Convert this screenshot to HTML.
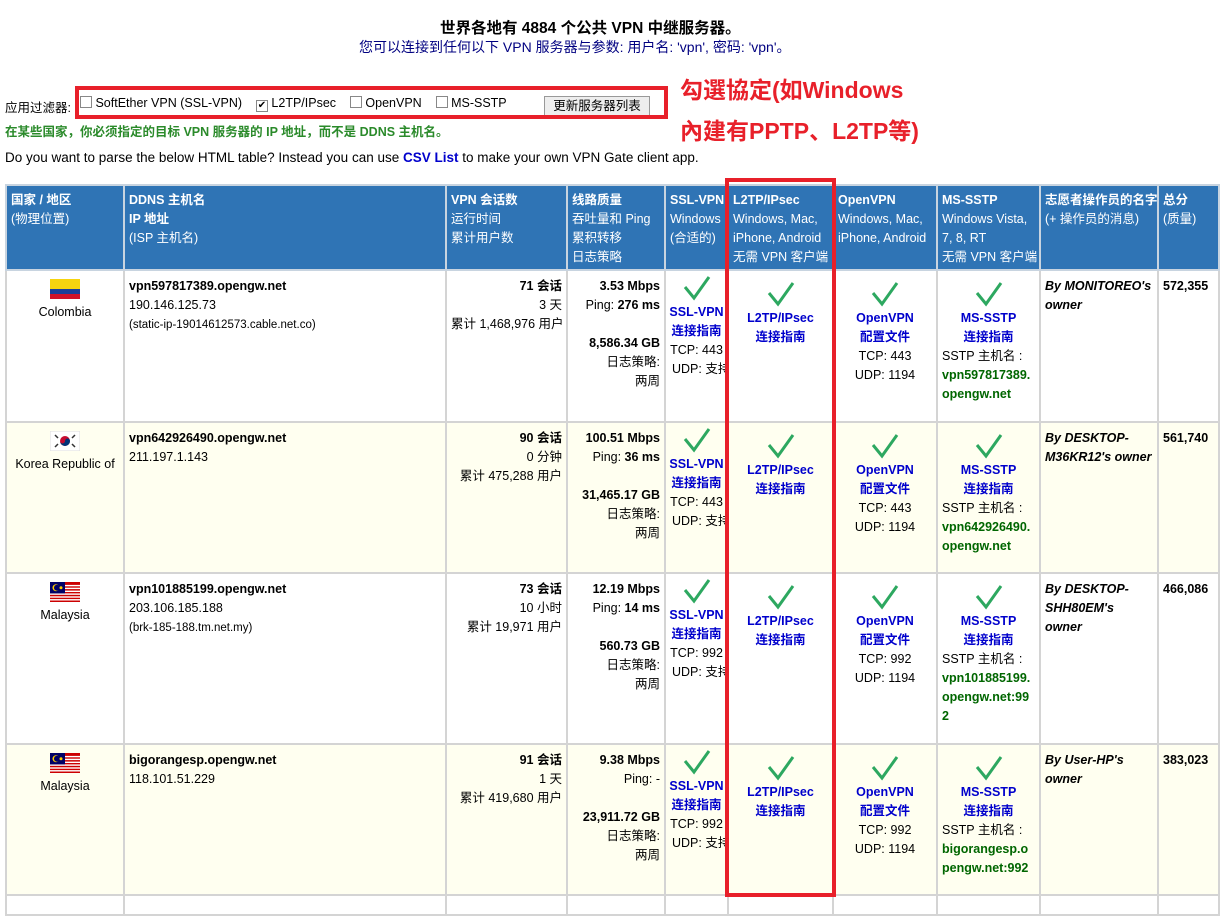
<!DOCTYPE html>
<html><head><meta charset="utf-8">
<style>
body{margin:0;width:1223px;height:899px;overflow:hidden;background:#fff;font-family:"Liberation Sans","Noto Sans CJK SC",sans-serif;font-size:12.5px;color:#000;position:relative}
.a{position:absolute;white-space:nowrap}
table{position:absolute;left:5px;top:184px;border-collapse:collapse;table-layout:fixed;width:1213px}
td{border:2px solid #d4d4d4;vertical-align:top;padding:6px 4px 0 4px;line-height:19px;overflow:hidden;white-space:nowrap}
tr.h td{background:#2f74b5;color:#fff;border-color:#c8d4e0;padding-top:5px}
tr.y td{background:#fffff0}
.c{text-align:center}.r{text-align:right}
b{font-weight:bold}
.bl{color:#0000cc;font-weight:bold}
.g{color:#006600;font-weight:bold}
.ck{display:block;margin:4px auto 2px;width:28px;height:26px}
.i{font-style:italic;font-weight:bold;white-space:normal}
.flag{display:block;margin:2px auto 4px;width:30px;height:20px}
</style></head><body>
<div class="a" style="left:440px;top:16px;font-size:15.5px;font-weight:bold">世界各地有 4884 个公共 VPN 中继服务器。</div>
<div class="a" style="left:359px;top:37px;font-size:14px;color:#000080">您可以连接到任何以下 VPN 服务器与参数: 用户名: 'vpn', 密码: 'vpn'。</div>
<div class="a" style="left:5px;top:97px;font-size:12.5px">应用过滤器:</div>
<div class="a" style="left:80px;top:96px;font-size:12.5px">
<span style="display:inline-block;width:10px;height:10px;border:1px solid #888;vertical-align:-1px"></span> SoftEther VPN (SSL-VPN) &nbsp;&nbsp;
<span style="display:inline-block;width:10px;height:10px;border:1px solid #888;vertical-align:-1px;font-size:10px;line-height:10px;text-align:center">✔</span> L2TP/IPsec &nbsp;&nbsp;
<span style="display:inline-block;width:10px;height:10px;border:1px solid #888;vertical-align:-1px"></span> OpenVPN &nbsp;&nbsp;
<span style="display:inline-block;width:10px;height:10px;border:1px solid #888;vertical-align:-1px"></span> MS-SSTP</div>
<div class="a" style="left:544px;top:96px;width:104px;height:18px;border:1px solid #999;background:#eee;font-size:12.5px;text-align:center;line-height:18px">更新服务器列表</div>
<div class="a" style="left:75px;top:86px;width:585px;height:25px;border:4px solid #e8202a"></div>
<div class="a" style="left:5px;top:121px;color:#2a8a2a;font-weight:bold;font-size:12.5px">在某些国家，你必须指定的目标 VPN 服务器的 IP 地址，而不是 DDNS 主机名。</div>
<div class="a" style="left:680px;top:70px;color:#e8202a;font-size:23px;line-height:41px;font-weight:bold">勾選協定(如Windows<br>內建有PPTP、L2TP等)</div>
<div class="a" style="left:5px;top:150px;font-size:13.5px">Do you want to parse the below HTML table? Instead you can use <span class="bl">CSV List</span> to make your own VPN Gate client app.</div>

<table>
<colgroup><col style="width:118px"><col style="width:322px"><col style="width:121px"><col style="width:98px"><col style="width:63px"><col style="width:105px"><col style="width:104px"><col style="width:103px"><col style="width:118px"><col style="width:61px"></colgroup>
<tr class="h" style="height:85px">
<td><b>国家 / 地区</b><br>(物理位置)</td>
<td><b>DDNS 主机名<br>IP 地址</b><br>(ISP 主机名)</td>
<td><b>VPN 会话数</b><br>运行时间<br>累计用户数</td>
<td><b>线路质量</b><br>吞吐量和 Ping<br>累积转移<br>日志策略</td>
<td><b>SSL-VPN</b><br>Windows<br>(合适的)</td>
<td><b>L2TP/IPsec</b><br>Windows, Mac,<br>iPhone, Android<br>无需 VPN 客户端</td>
<td><b>OpenVPN</b><br>Windows, Mac,<br>iPhone, Android</td>
<td><b>MS-SSTP</b><br>Windows Vista,<br>7, 8, RT<br>无需 VPN 客户端</td>
<td><b>志愿者操作员的名字</b><br>(+ 操作员的消息)</td>
<td><b>总分</b><br>(质量)</td>
</tr>
<tr style="height:152px">
<td class="c"><svg class="flag" viewBox="0 0 30 20"><rect width="30" height="10" fill="#f6d40f"/><rect y="10" width="30" height="5" fill="#1b3f9a"/><rect y="15" width="30" height="5" fill="#d0122a"/></svg>Colombia</td>
<td><b>vpn597817389.opengw.net</b><br>190.146.125.73<br><span style="font-size:11.5px">(static-ip-19014612573.cable.net.co)</span></td>
<td class="r"><b>71 会话</b><br>3 天<br>累计 1,468,976 用户</td>
<td class="r"><b>3.53 Mbps</b><br>Ping: <b>276 ms</b><br><br><b>8,586.34 GB</b><br>日志策略:<br>两周</td>
<td class="c" style="padding:0 2px"><svg class="ck" viewBox="0 0 28 26"><path d="M2 12 L11 23 L26 2" fill="none" stroke="#2da860" stroke-width="3"/></svg><span class="bl">SSL-VPN<br>连接指南</span><br>TCP: 443<br><span style="margin-left:4px">UDP: 支持</span></td>
<td class="c"><svg class="ck" viewBox="0 0 28 26"><path d="M2 12 L11 23 L26 2" fill="none" stroke="#2da860" stroke-width="3"/></svg><span class="bl">L2TP/IPsec<br>连接指南</span></td>
<td class="c"><svg class="ck" viewBox="0 0 28 26"><path d="M2 12 L11 23 L26 2" fill="none" stroke="#2da860" stroke-width="3"/></svg><span class="bl">OpenVPN<br>配置文件</span><br>TCP: 443<br>UDP: 1194</td>
<td><svg class="ck" viewBox="0 0 28 26"><path d="M2 12 L11 23 L26 2" fill="none" stroke="#2da860" stroke-width="3"/></svg><div class="c"><span class="bl">MS-SSTP<br>连接指南</span></div>SSTP 主机名 :<br><span class="g">vpn597817389.<br>opengw.net</span></td>
<td class="i">By MONITOREO's owner</td>
<td><b>572,355</b></td>
</tr>
<tr class="y" style="height:151px">
<td class="c" style="padding:6px 0 0"><svg class="flag" viewBox="0 0 30 20"><rect width="30" height="20" fill="#fff" stroke="#ddd"/><circle cx="15" cy="10" r="5" fill="#c60c30"/><path d="M10 10a5 5 0 0 0 10 0a2.5 2.5 0 0 0-5 0a2.5 2.5 0 0 1-5 0z" fill="#003478"/><g stroke="#333" stroke-width="1.5"><path d="M5 4l3 3M22 13l3 3M25 4l-3 3M8 13l-3 3"/></g></svg>Korea Republic of</td>
<td><b>vpn642926490.opengw.net</b><br>211.197.1.143</td>
<td class="r"><b>90 会话</b><br>0 分钟<br>累计 475,288 用户</td>
<td class="r"><b>100.51 Mbps</b><br>Ping: <b>36 ms</b><br><br><b>31,465.17 GB</b><br>日志策略:<br>两周</td>
<td class="c" style="padding:0 2px"><svg class="ck" viewBox="0 0 28 26"><path d="M2 12 L11 23 L26 2" fill="none" stroke="#2da860" stroke-width="3"/></svg><span class="bl">SSL-VPN<br>连接指南</span><br>TCP: 443<br><span style="margin-left:4px">UDP: 支持</span></td>
<td class="c"><svg class="ck" viewBox="0 0 28 26"><path d="M2 12 L11 23 L26 2" fill="none" stroke="#2da860" stroke-width="3"/></svg><span class="bl">L2TP/IPsec<br>连接指南</span></td>
<td class="c"><svg class="ck" viewBox="0 0 28 26"><path d="M2 12 L11 23 L26 2" fill="none" stroke="#2da860" stroke-width="3"/></svg><span class="bl">OpenVPN<br>配置文件</span><br>TCP: 443<br>UDP: 1194</td>
<td><svg class="ck" viewBox="0 0 28 26"><path d="M2 12 L11 23 L26 2" fill="none" stroke="#2da860" stroke-width="3"/></svg><div class="c"><span class="bl">MS-SSTP<br>连接指南</span></div>SSTP 主机名 :<br><span class="g">vpn642926490.<br>opengw.net</span></td>
<td class="i">By DESKTOP-M36KR12's owner</td>
<td><b>561,740</b></td>
</tr>
<tr style="height:171px">
<td class="c"><svg class="flag" viewBox="0 0 30 20"><g fill="#cc0001"><rect width="30" height="20"/></g><g fill="#fff"><rect y="2.9" width="30" height="1.4"/><rect y="5.7" width="30" height="1.4"/><rect y="8.6" width="30" height="1.4"/><rect y="11.4" width="30" height="1.4"/><rect y="14.3" width="30" height="1.4"/><rect y="17.1" width="30" height="1.4"/></g><rect width="15" height="11.4" fill="#010066"/><circle cx="6" cy="5.7" r="3.5" fill="#fc0"/><circle cx="7" cy="5.7" r="3" fill="#010066"/><circle cx="11" cy="5.7" r="1.5" fill="#fc0"/></svg>Malaysia</td>
<td><b>vpn101885199.opengw.net</b><br>203.106.185.188<br><span style="font-size:11.5px">(brk-185-188.tm.net.my)</span></td>
<td class="r"><b>73 会话</b><br>10 小时<br>累计 19,971 用户</td>
<td class="r"><b>12.19 Mbps</b><br>Ping: <b>14 ms</b><br><br><b>560.73 GB</b><br>日志策略:<br>两周</td>
<td class="c" style="padding:0 2px"><svg class="ck" viewBox="0 0 28 26"><path d="M2 12 L11 23 L26 2" fill="none" stroke="#2da860" stroke-width="3"/></svg><span class="bl">SSL-VPN<br>连接指南</span><br>TCP: 992<br><span style="margin-left:4px">UDP: 支持</span></td>
<td class="c"><svg class="ck" viewBox="0 0 28 26"><path d="M2 12 L11 23 L26 2" fill="none" stroke="#2da860" stroke-width="3"/></svg><span class="bl">L2TP/IPsec<br>连接指南</span></td>
<td class="c"><svg class="ck" viewBox="0 0 28 26"><path d="M2 12 L11 23 L26 2" fill="none" stroke="#2da860" stroke-width="3"/></svg><span class="bl">OpenVPN<br>配置文件</span><br>TCP: 992<br>UDP: 1194</td>
<td><svg class="ck" viewBox="0 0 28 26"><path d="M2 12 L11 23 L26 2" fill="none" stroke="#2da860" stroke-width="3"/></svg><div class="c"><span class="bl">MS-SSTP<br>连接指南</span></div>SSTP 主机名 :<br><span class="g">vpn101885199.<br>opengw.net:99<br>2</span></td>
<td class="i">By DESKTOP-SHH80EM's owner</td>
<td><b>466,086</b></td>
</tr>
<tr class="y" style="height:151px">
<td class="c"><svg class="flag" viewBox="0 0 30 20"><g fill="#cc0001"><rect width="30" height="20"/></g><g fill="#fff"><rect y="2.9" width="30" height="1.4"/><rect y="5.7" width="30" height="1.4"/><rect y="8.6" width="30" height="1.4"/><rect y="11.4" width="30" height="1.4"/><rect y="14.3" width="30" height="1.4"/><rect y="17.1" width="30" height="1.4"/></g><rect width="15" height="11.4" fill="#010066"/><circle cx="6" cy="5.7" r="3.5" fill="#fc0"/><circle cx="7" cy="5.7" r="3" fill="#010066"/><circle cx="11" cy="5.7" r="1.5" fill="#fc0"/></svg>Malaysia</td>
<td><b>bigorangesp.opengw.net</b><br>118.101.51.229</td>
<td class="r"><b>91 会话</b><br>1 天<br>累计 419,680 用户</td>
<td class="r"><b>9.38 Mbps</b><br>Ping: -<br><br><b>23,911.72 GB</b><br>日志策略:<br>两周</td>
<td class="c" style="padding:0 2px"><svg class="ck" viewBox="0 0 28 26"><path d="M2 12 L11 23 L26 2" fill="none" stroke="#2da860" stroke-width="3"/></svg><span class="bl">SSL-VPN<br>连接指南</span><br>TCP: 992<br><span style="margin-left:4px">UDP: 支持</span></td>
<td class="c"><svg class="ck" viewBox="0 0 28 26"><path d="M2 12 L11 23 L26 2" fill="none" stroke="#2da860" stroke-width="3"/></svg><span class="bl">L2TP/IPsec<br>连接指南</span></td>
<td class="c"><svg class="ck" viewBox="0 0 28 26"><path d="M2 12 L11 23 L26 2" fill="none" stroke="#2da860" stroke-width="3"/></svg><span class="bl">OpenVPN<br>配置文件</span><br>TCP: 992<br>UDP: 1194</td>
<td><svg class="ck" viewBox="0 0 28 26"><path d="M2 12 L11 23 L26 2" fill="none" stroke="#2da860" stroke-width="3"/></svg><div class="c"><span class="bl">MS-SSTP<br>连接指南</span></div>SSTP 主机名 :<br><span class="g">bigorangesp.o<br>pengw.net:992</span></td>
<td class="i">By User-HP's owner</td>
<td><b>383,023</b></td>
</tr>
<tr style="height:20px"><td></td><td></td><td></td><td></td><td></td><td></td><td></td><td></td><td></td><td></td></tr>
</table>
<div class="a" style="left:725px;top:178px;width:103px;height:711px;border:4px solid #e8202a"></div>
</body></html>
